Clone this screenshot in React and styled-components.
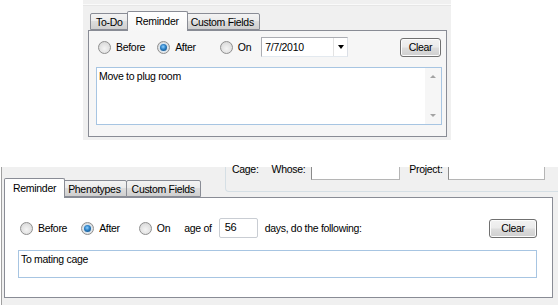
import React from 'react'
import styled, { createGlobalStyle } from 'styled-components'

const GlobalStyle = createGlobalStyle`
  body {
    margin: 0;
    background: #fff;
    font-family: "Liberation Sans", Arial, sans-serif;
    font-size: 10.5px;
    letter-spacing: -0.3px;
    color: #000;
  }
`

const Page = styled.div`
  width: 558px;
  height: 305px;
  display: flex;
  flex-direction: column;
  overflow: hidden;
`

/* ---------- first capture ---------- */

const TopShot = styled.div`
  margin-left: 83px;
  width: 368px;
  height: 140px;
  background: #f0f0f0;
  display: flex;
  flex-direction: column;
`

const TopRule = styled.div`
  height: 1px;
  margin-top: 4px;
  background: #fafafa;
  border-bottom: 1px solid #e6e6e6;
`

const TabControl = styled.div`
  margin: ${p => p.$margin};
  width: ${p => p.$width}px;
  flex-shrink: 0;
  display: flex;
  flex-direction: column;
`

const TabStrip = styled.div`
  display: flex;
  align-items: flex-end;
  height: ${p => p.$height}px;
  padding-left: 2px;
  position: relative;
  z-index: 1;
`

const Tab = styled.div`
  box-sizing: border-box;
  height: ${p => (p.$active ? 20 : 17)}px;
  padding: ${p => (p.$active ? '2px 8px 0 8px' : '1px 5px 0 5px')};
  margin: ${p => (p.$active ? '0 -2px -1px -2px' : '0 0 0 -1px')};
  border: 1px solid #898c95;
  border-bottom: ${p => (p.$active ? 'none' : '1px solid #898c95')};
  border-radius: 2px 2px 0 0;
  background: ${p =>
    p.$active
      ? `linear-gradient(#ffffff, ${p.$panel})`
      : 'linear-gradient(#f3f3f3 0%, #ebebeb 45%, #dddddd 50%, #cfcfcf 100%)'};
  position: relative;
  z-index: ${p => (p.$active ? 2 : 1)};
  white-space: nowrap;
  line-height: 14px;
  &:first-child {
    margin-left: ${p => (p.$active ? '-2px' : '0')};
  }
`

const TabPanel = styled.div`
  box-sizing: border-box;
  height: ${p => p.$height}px;
  border: 1px solid #898c95;
  background: ${p => p.$bg};
  padding: ${p => p.$pad};
  display: flex;
  flex-direction: column;
`

const OptionRow = styled.div`
  display: flex;
  align-items: center;
  height: ${p => p.$height}px;
`

const RadioLabel = styled.label`
  display: flex;
  align-items: center;
  gap: 5px;
  margin-right: ${p => p.$gap}px;
  white-space: nowrap;
`

const RadioCircle = styled.span`
  box-sizing: border-box;
  width: 13px;
  height: 13px;
  border-radius: 50%;
  border: 1px solid #8f8f8f;
  background: radial-gradient(circle at 50% 60%, #f4f4f4 0%, #e2e2e2 55%, #cfcfcf 100%);
  display: flex;
  align-items: center;
  justify-content: center;
  &::after {
    content: '';
    display: ${p => (p.$checked ? 'block' : 'none')};
    width: 7px;
    height: 7px;
    border-radius: 50%;
    background: radial-gradient(circle at 45% 40%, #8fd0ff 0%, #2a7fc4 45%, #0d3f6e 100%);
    box-shadow: 0 0 0 1px #d6e6f3;
  }
`

const Spacer = styled.div`
  flex: 1;
`

const Button = styled.button`
  box-sizing: border-box;
  width: ${p => p.$width}px;
  height: 19px;
  padding: 0;
  border: 1px solid #707070;
  border-radius: 3px;
  background: linear-gradient(#f2f2f2 0%, #ebebeb 48%, #dddddd 52%, #cfcfcf 100%);
  box-shadow: inset 0 0 0 1px #fcfcfc;
  font: inherit;
  letter-spacing: inherit;
  color: #000;
`

const DateBox = styled.div`
  box-sizing: border-box;
  width: 87px;
  height: 20px;
  margin-top: -1px;
  border: 1px solid #abadb3;
  border-right-color: #dbdfe6;
  border-bottom-color: #e3e9ef;
  background: #fff;
  display: flex;
  align-items: center;
`

const DateText = styled.span`
  flex: 1;
  padding-left: 3px;
`

const DropButton = styled.span`
  width: 13px;
  height: 100%;
  border-left: 1px solid #e3e3e3;
  display: flex;
  align-items: center;
  justify-content: center;
  &::after {
    content: '';
    border-left: 3px solid transparent;
    border-right: 3px solid transparent;
    border-top: 4px solid #000;
  }
`

const NoteArea = styled.div`
  box-sizing: border-box;
  height: ${p => p.$height}px;
  margin: ${p => p.$margin};
  border: 1px solid #a7c5e2;
  background: #fff;
  display: flex;
`

const NoteText = styled.div`
  flex: 1;
  padding: 2px 2px;
`

const ScrollBar = styled.div`
  width: 16px;
  background: #f6f6f6;
  display: flex;
  flex-direction: column;
  justify-content: space-between;
  align-items: center;
  padding: 7px 0 7px;
`

const Arrow = styled.span`
  width: 0;
  height: 0;
  border-left: 3px solid transparent;
  border-right: 3px solid transparent;
  border-${p => (p.$up ? 'bottom' : 'top')}: 3px solid #a3a3a3;
`

/* ---------- second capture ---------- */

const BottomShot = styled.div`
  margin-top: 27px;
  margin-left: 1px;
  height: 138px;
  background: #f0f0f0;
  border-left: 1px solid #a0a0a0;
  display: flex;
  flex-direction: column;
`

const HeaderRow = styled.div`
  display: flex;
  height: 30px;
`

const CageGroup = styled.div`
  box-sizing: border-box;
  flex: 1;
  height: 25px;
  border: 1px solid #d5dfe5;
  border-top: none;
  border-right: none;
  border-radius: 0 0 0 4px;
  display: flex;
  align-items: flex-start;
  padding-left: 6px;
`

const FieldLabel = styled.span`
  margin-right: ${p => p.$after}px;
  margin-top: -4px;
  line-height: 12px;
  white-space: nowrap;
`

const FieldBox = styled.div`
  box-sizing: border-box;
  width: ${p => p.$width}px;
  height: 13px;
  border: 1px solid #8a8a8a;
  border-top: none;
  border-right-color: #b5b5b5;
  border-bottom-color: #b5b5b5;
  background: #fff;
  margin-right: ${p => p.$after}px;
`

const Inline = styled.span`
  margin: ${p => p.$margin};
  white-space: nowrap;
`

const AgeBox = styled.div`
  box-sizing: border-box;
  width: 39px;
  height: 20px;
  border: 1px solid #c9cdd3;
  border-radius: 2px;
  background: #fff;
  padding: 2px 0 0 5px;
  font-size: 11px;
`

export default function App() {
  return (
    <Page>
      <GlobalStyle />

      <TopShot>
        <TopRule />
        <TabControl $margin="6px 0 0 5px" $width={359}>
          <TabStrip $height={18}>
            <Tab>To-Do</Tab>
            <Tab $active $panel="#f6f6f6">Reminder</Tab>
            <Tab>Custom Fields</Tab>
          </TabStrip>
          <TabPanel $height={107} $bg="#f6f6f6" $pad="6px 5px 0 9px">
            <OptionRow $height={20}>
              <RadioLabel $gap={12}>
                <RadioCircle />
                Before
              </RadioLabel>
              <RadioLabel $gap={24}>
                <RadioCircle $checked />
                After
              </RadioLabel>
              <RadioLabel $gap={10}>
                <RadioCircle />
                On
              </RadioLabel>
              <DateBox>
                <DateText>7/7/2010</DateText>
                <DropButton />
              </DateBox>
              <Spacer />
              <Button $width={41}>Clear</Button>
            </OptionRow>
            <NoteArea $height={58} $margin="10px -1px 0 -2px">
              <NoteText>Move to plug room</NoteText>
              <ScrollBar>
                <Arrow $up />
                <Arrow />
              </ScrollBar>
            </NoteArea>
          </TabPanel>
        </TabControl>
      </TopShot>

      <BottomShot>
        <HeaderRow>
          <TabControl $margin="12px 0 0 2px" $width={221}>
            <TabStrip $height={18}>
              <Tab $active $panel="#ffffff">Reminder</Tab>
              <Tab>Phenotypes</Tab>
              <Tab>Custom Fields</Tab>
            </TabStrip>
          </TabControl>
          <CageGroup>
            <FieldLabel $after={13}>Cage:</FieldLabel>
            <FieldLabel $after={6}>Whose:</FieldLabel>
            <FieldBox $width={89} $after={9} />
            <FieldLabel $after={5}>Project:</FieldLabel>
            <FieldBox $width={97} $after={0} />
          </CageGroup>
        </HeaderRow>
        <TabControl $margin="0 0 0 2px" $width={549}>
          <TabPanel $height={101} $bg="#ffffff" $pad="20px 15px 0 15px">
            <OptionRow $height={20}>
              <RadioLabel $gap={14}>
                <RadioCircle />
                Before
              </RadioLabel>
              <RadioLabel $gap={19}>
                <RadioCircle $checked />
                After
              </RadioLabel>
              <RadioLabel $gap={14}>
                <RadioCircle />
                On
              </RadioLabel>
              <Inline $margin="0 7px 0 0">age of</Inline>
              <AgeBox>56</AgeBox>
              <Inline $margin="0 0 0 7px">days, do the following:</Inline>
              <Spacer />
              <Button $width={48}>Clear</Button>
            </OptionRow>
            <NoteArea $height={28} $margin="12px 0 0 -2px">
              <NoteText>To mating cage</NoteText>
            </NoteArea>
          </TabPanel>
        </TabControl>
      </BottomShot>
    </Page>
  )
}
